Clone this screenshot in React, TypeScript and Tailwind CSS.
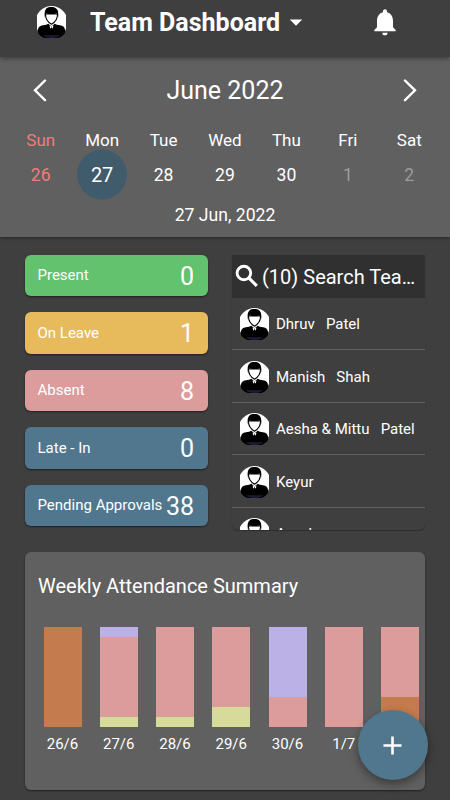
import { useState } from 'react'
import { MdAdd, MdArrowDropDown, MdNotifications } from 'react-icons/md'

type Day = { name: string; date: number; tone?: 'sunday' | 'muted' }
type Bar = { label: string; parts: { color: string; value: number }[] }

const DAYS: Day[] = [
  { name: 'Sun', date: 26, tone: 'sunday' },
  { name: 'Mon', date: 27 },
  { name: 'Tue', date: 28 },
  { name: 'Wed', date: 29 },
  { name: 'Thu', date: 30 },
  { name: 'Fri', date: 1, tone: 'muted' },
  { name: 'Sat', date: 2, tone: 'muted' },
]

const STATS = [
  { label: 'Present', value: 0, color: 'bg-[#62c26d]' },
  { label: 'On Leave', value: 1, color: 'bg-[#e7bb5b]' },
  { label: 'Absent', value: 8, color: 'bg-[#dc9c9b]' },
  { label: 'Late - In', value: 0, color: 'bg-[#51778f]' },
  { label: 'Pending Approvals', value: 38, color: 'bg-[#51778f]' },
]

const MEMBERS = ['Dhruv   Patel', 'Manish   Shah', 'Aesha & Mittu   Patel', 'Keyur', 'Ayush']

const ABSENT = 'bg-[#dc9c9b]'
const LEAVE = 'bg-[#bbb1e6]'
const PRESENT = 'bg-[#d6da9b]'
const WEEK_OFF = 'bg-[#c47b4d]'

const BARS: Bar[] = [
  { label: '26/6', parts: [{ color: WEEK_OFF, value: 100 }] },
  {
    label: '27/6',
    parts: [
      { color: LEAVE, value: 10 },
      { color: ABSENT, value: 80 },
      { color: PRESENT, value: 10 },
    ],
  },
  {
    label: '28/6',
    parts: [
      { color: ABSENT, value: 90 },
      { color: PRESENT, value: 10 },
    ],
  },
  {
    label: '29/6',
    parts: [
      { color: ABSENT, value: 80 },
      { color: PRESENT, value: 20 },
    ],
  },
  {
    label: '30/6',
    parts: [
      { color: LEAVE, value: 70 },
      { color: ABSENT, value: 30 },
    ],
  },
  { label: '1/7', parts: [{ color: ABSENT, value: 100 }] },
  {
    label: '2/7',
    parts: [
      { color: ABSENT, value: 70 },
      { color: WEEK_OFF, value: 30 },
    ],
  },
]

/** Placeholder portrait: white oval cut at the sides, man in a suit. */
function Avatar() {
  return (
    <svg viewBox="1.500 0 29 32" className="h-8 w-[29px] shrink-0">
      <circle cx="16" cy="16" r="16" fill="#fff" />
      <path
        d="M2.500 27V24.500C2.500 21 4.500 19.800 7.500 19.300C10 19 11.500 18.700 12.800 17.800L16 20.500L19.200 17.800C20.500 18.700 22 19 24.500 19.300C27.500 19.800 29.500 21 29.500 24.500V27C27 31 22 33 16 33C10 33 5 31 2.500 27Z"
        fill="#000"
      />
      <path d="M7 29.300H25C22.500 31.200 19.500 32 16 32C12.500 32 9.500 31.200 7 29.300Z" fill="#1b1b3c" />
      <path d="M14 19.400L16 20.600L18 19.400L17.200 22.800L16 20.900L14.800 22.800Z" fill="#fff" />
      <path
        d="M10 8C9.800 13.300 11.800 15.800 16 18.200C20.200 15.800 22.200 13.300 22 8Z"
        fill="#fff"
        stroke="#000"
        strokeWidth="1.100"
      />
      <path
        d="M9.400 11.500C8.300 4.500 10.500 1.300 14.500 1C19.500 0.500 24 2.200 22.600 11.500C22.200 9.800 22.200 8.400 21.200 7.400C17.500 8.200 14 8.100 11 7.400C9.900 8.400 10 10 9.400 11.500Z"
        fill="#000"
      />
    </svg>
  )
}

function Chevron({ flip = false }: { flip?: boolean }) {
  return (
    <svg
      viewBox="0 0 14 24"
      className={flip ? 'h-6 w-3.5 -scale-x-100' : 'h-6 w-3.5'}
      fill="none"
      stroke="currentColor"
      strokeWidth="2.4"
      strokeLinecap="round"
    >
      <path d="M12 1.500L2 11.300L12 21.200" />
    </svg>
  )
}

function SearchIcon() {
  return (
    <svg viewBox="0 0 30 30" className="size-[30px] shrink-0" fill="none" stroke="currentColor">
      <circle cx="11.900" cy="12" r="6.800" strokeWidth="2.900" />
      <path d="M16.800 16.900L24.800 24.900" strokeWidth="3.100" />
    </svg>
  )
}

function Header() {
  return (
    <header className="relative z-10 flex h-[57px] shrink-0 items-start bg-[#3f3f3f] pr-[49px] pl-[37px] shadow-[0_1px_5px_rgba(0,0,0,0.45)]">
      <div className="mt-1.5">
        <Avatar />
      </div>
      <h1 className="mt-2 ml-6 text-[25px] leading-[30px] font-bold">Team Dashboard</h1>
      <MdArrowDropDown className="ml-px mt-[7px] size-[30px]" />
      <MdNotifications className="mt-1.5 ml-auto size-8" />
    </header>
  )
}

function Calendar({ selected, onSelect }: { selected: number; onSelect: (d: number) => void }) {
  return (
    <section className="h-[180px] shrink-0 bg-[#606060] shadow-[0_1px_3px_rgba(0,0,0,0.4)]">
      <div className="flex h-[49px] items-center justify-between px-[33px] pt-[18px]">
        <Chevron />
        <h2 className="text-[25px] leading-[30px]">June 2022</h2>
        <Chevron flip />
      </div>
      <div className="mt-[23.5px] grid grid-cols-7 px-2.5 text-center text-[17px] leading-5">
        {DAYS.map((d) => {
          const tone = d.tone === 'sunday' ? 'text-[#f27c7c]' : d.tone === 'muted' ? 'text-[#9b9b9b]' : 'text-white'
          return (
            <div key={d.name} className="flex flex-col items-center">
              <span className={d.tone === 'sunday' ? 'text-[#f27c7c]' : 'text-white'}>{d.name}</span>
              <button
                onClick={() => onSelect(d.date)}
                className={
                  d.date === selected
                    ? 'flex size-[50px] -translate-y-[0.5px] items-center justify-center rounded-full bg-[#405b6c] text-[20px] text-white'
                    : `flex size-[50px] items-center justify-center text-[17.6px] ${tone}`
                }
              >
                {d.date}
              </button>
            </div>
          )
        })}
      </div>
      <p className="mt-[5px] text-center text-[17.6px] leading-5">27 Jun, 2022</p>
    </section>
  )
}

function Stats() {
  return (
    <div className="flex w-[183px] flex-col gap-4">
      {STATS.map((s) => (
        <div
          key={s.label}
          className={`flex h-[41.6px] items-center justify-between rounded-md pr-3.5 pl-[12.5px] whitespace-nowrap shadow-[0_1px_2px_rgba(0,0,0,0.5)] ${s.color}`}
        >
          <span className="text-[15px]">{s.label}</span>
          <span className="pt-0.5 text-[25px]">{s.value}</span>
        </div>
      ))}
    </div>
  )
}

function Team() {
  return (
    <div className="h-[275.5px] w-[193px] overflow-hidden rounded-b-md shadow-[0_1px_1px_rgba(0,0,0,0.3)]">
      <div className="flex h-[43px] items-center bg-[#303030]">
        <SearchIcon />
        <span className="w-[156px] truncate pt-0.5 text-[20px]">(10) Search Team Member</span>
      </div>
      {MEMBERS.map((name) => (
        <div key={name} className="flex h-[52.5px] items-center border-b border-[#606060] pt-0.5 pl-[7.5px]">
          <Avatar />
          <span className="ml-[7.5px] text-[15px] whitespace-pre">{name}</span>
        </div>
      ))}
    </div>
  )
}

function WeeklySummary() {
  return (
    <section className="h-[238px] overflow-hidden rounded-md bg-[#606060] pt-[19px] shadow-[0_1px_2px_rgba(0,0,0,0.5)]">
      <h2 className="pl-[13px] text-[20px] leading-[30px]">Weekly Attendance Summary</h2>
      <div className="mt-[26px] flex gap-[18.25px] pl-[18.5px]">
        {BARS.map((b) => (
          <div key={b.label} className="w-[38px] shrink-0 text-center">
            <div className="flex h-[100px] flex-col">
              {b.parts.map((p, i) => (
                <div key={i} className={p.color} style={{ height: `${p.value}%` }} />
              ))}
            </div>
            <div className="mt-[7px] text-[15px] leading-5">{b.label}</div>
          </div>
        ))}
      </div>
    </section>
  )
}

export default function App() {
  const [selected, setSelected] = useState(27)

  return (
    <div className="relative flex h-[800px] w-[450px] flex-col overflow-hidden bg-[#3f3f3f] font-['Roboto',sans-serif] text-white">
      <Header />
      <Calendar selected={selected} onSelect={setSelected} />
      <main className="flex flex-col px-[25px] pt-[17.5px]">
        <div className="flex h-[276px] items-start justify-between">
          <Stats />
          <Team />
        </div>
        <div className="mt-[21.5px]">
          <WeeklySummary />
        </div>
      </main>
      <button
        aria-label="Add"
        className="absolute right-[22.5px] bottom-5 flex size-[70px] items-center justify-center rounded-full bg-[#51778f] shadow-[0_4px_10px_rgba(0,0,0,0.4)]"
      >
        <MdAdd className="size-[31px]" />
      </button>
    </div>
  )
}
